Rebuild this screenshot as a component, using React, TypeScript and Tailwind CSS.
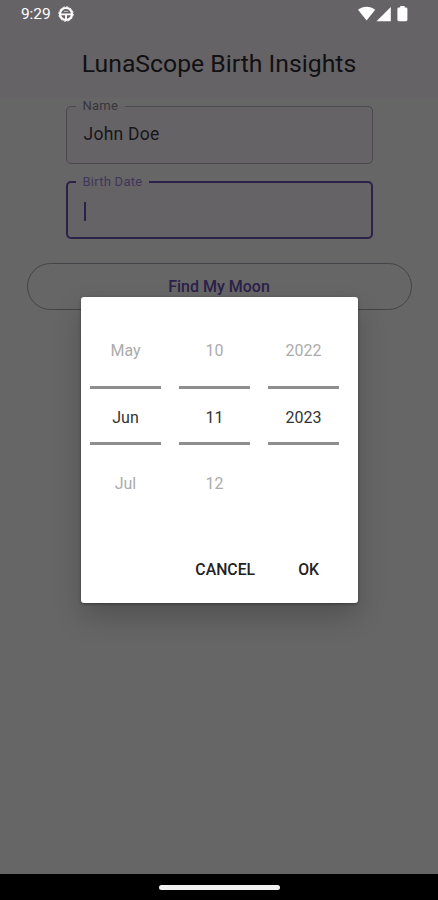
import type { ReactNode } from "react";

// ─────────────────────────────────────────────
// STATUS BAR
// ─────────────────────────────────────────────

function StatusBar() {
  return (
    <div className="flex h-7 items-center justify-between pl-[21px] pr-[30px] text-white">
      <div className="flex items-center gap-[7px]">
        <span className="text-[15.5px] leading-7 tracking-[-0.1px]">9:29</span>
        <svg className="h-4 w-4" viewBox="0 0 16 16" fill="none" stroke="currentColor">
          <circle cx="8" cy="8" r="6" strokeWidth="2.2" />
          <circle cx="8" cy="8" r="7.2" strokeWidth="1" strokeDasharray="2.2 1.57" />
          <path d="M2.5 8.4h11M8 8.4v5" strokeWidth="1.8" />
          <path d="M5.8 5.4h4.4" strokeWidth="0.6" />
        </svg>
      </div>
      <svg className="h-4 w-[50px]" viewBox="0 0 50 16" fill="currentColor">
        <path d="M0 3.8C5.2-.4 12-.4 17.2 3.8L8.6 14.4Z" />
        <path d="M32.8 1v14.2H18.5Z" />
        <path d="M42.2 0h4.4v1.6h1.4q1.4 0 1.4 1.4v10.8q0 1.4-1.4 1.4h-7.2q-1.4 0-1.4-1.4V3q0-1.4 1.4-1.4h1.4Z" />
      </svg>
    </div>
  );
}

// ─────────────────────────────────────────────
// OUTLINED TEXT FIELD
// ─────────────────────────────────────────────

interface OutlinedFieldProps {
  label: string;
  focused?: boolean;
  children: ReactNode;
}

function OutlinedField({ label, focused = false, children }: OutlinedFieldProps) {
  return (
    <fieldset
      className={`w-[307px] rounded-[5px] bg-[#666366] ${
        focused
          ? "h-[65px] border-2 border-[#2b2149] pl-[8px]"
          : "h-[66px] border border-[#4b494d] pl-[9px]"
      }`}
    >
      <legend
        className={`px-[7px] text-[13px] leading-4 tracking-[0.25px] ${
          focused ? "text-[#40365b]" : "text-[#37353a]"
        }`}
      >
        {label}
      </legend>
      <div className="flex h-[41px] items-center px-2 text-[17.5px] tracking-[0.25px] text-[#171619]">
        {children}
      </div>
    </fieldset>
  );
}

// ─────────────────────────────────────────────
// DATE PICKER DIALOG
// ─────────────────────────────────────────────

interface WheelProps {
  previous: string;
  current: string;
  next?: string;
}

function Wheel({ previous, current, next }: WheelProps) {
  return (
    <div className="w-[71px] text-center text-[16px] text-[#acacac]">
      <div className="flex h-[68px] items-center justify-center pb-[3px]">{previous}</div>
      <div className="flex h-[59px] items-center justify-center border-y-[3px] border-[#8e8e8e] pt-[4px] text-[#333]">
        {current}
      </div>
      <div className="flex h-[68px] items-center justify-center pt-[9px]">{next}</div>
    </div>
  );
}

function DatePickerDialog() {
  return (
    <div className="absolute left-[81px] top-[297px] h-[306px] w-[276.5px] rounded-[3px] bg-white shadow-[0_14px_28px_rgba(0,0,0,0.2),0_1px_3px_rgba(0,0,0,0.35)]">
      <div className="flex gap-[18px] px-[9px] pt-[21px]">
        <Wheel previous="May" current="Jun" next="Jul" />
        <Wheel previous="10" current="11" next="12" />
        <Wheel previous="2022" current="2023" />
      </div>
      <div className="flex justify-end gap-[43px] pr-[38.5px] pt-[45px] text-[15.8px] font-medium leading-6 text-[#222]">
        <button>CANCEL</button>
        <button>OK</button>
      </div>
    </div>
  );
}

// ─────────────────────────────────────────────
// SCREEN
// ─────────────────────────────────────────────

export default function App() {
  return (
    <div className="relative flex h-[900px] w-[438px] flex-col overflow-hidden bg-[#666] font-['Roboto',sans-serif]">
      <header className="h-[98px] bg-[#666366]">
        <StatusBar />
        <h1 className="pt-[19px] text-center text-[24.75px] leading-[34px] text-[#111012]">
          LunaScope Birth Insights
        </h1>
      </header>

      <main className="flex flex-1 flex-col items-center">
        <OutlinedField label="Name">John Doe</OutlinedField>
        <div className="mt-[10px]">
          <OutlinedField label="Birth Date" focused>
            <span className="mt-px h-[19px] w-[2px] bg-[#2b2149]" />
          </OutlinedField>
        </div>
        <button className="mt-[24px] h-[47px] w-[385px] rounded-full border border-[#454347] pt-px text-[16px] font-medium text-[#2b2149]">
          Find My Moon
        </button>
      </main>

      <footer className="flex h-[26px] items-center justify-center bg-black">
        <div className="h-[5px] w-[121px] rounded-full bg-[#f2f2f2]" />
      </footer>

      <DatePickerDialog />
    </div>
  );
}
